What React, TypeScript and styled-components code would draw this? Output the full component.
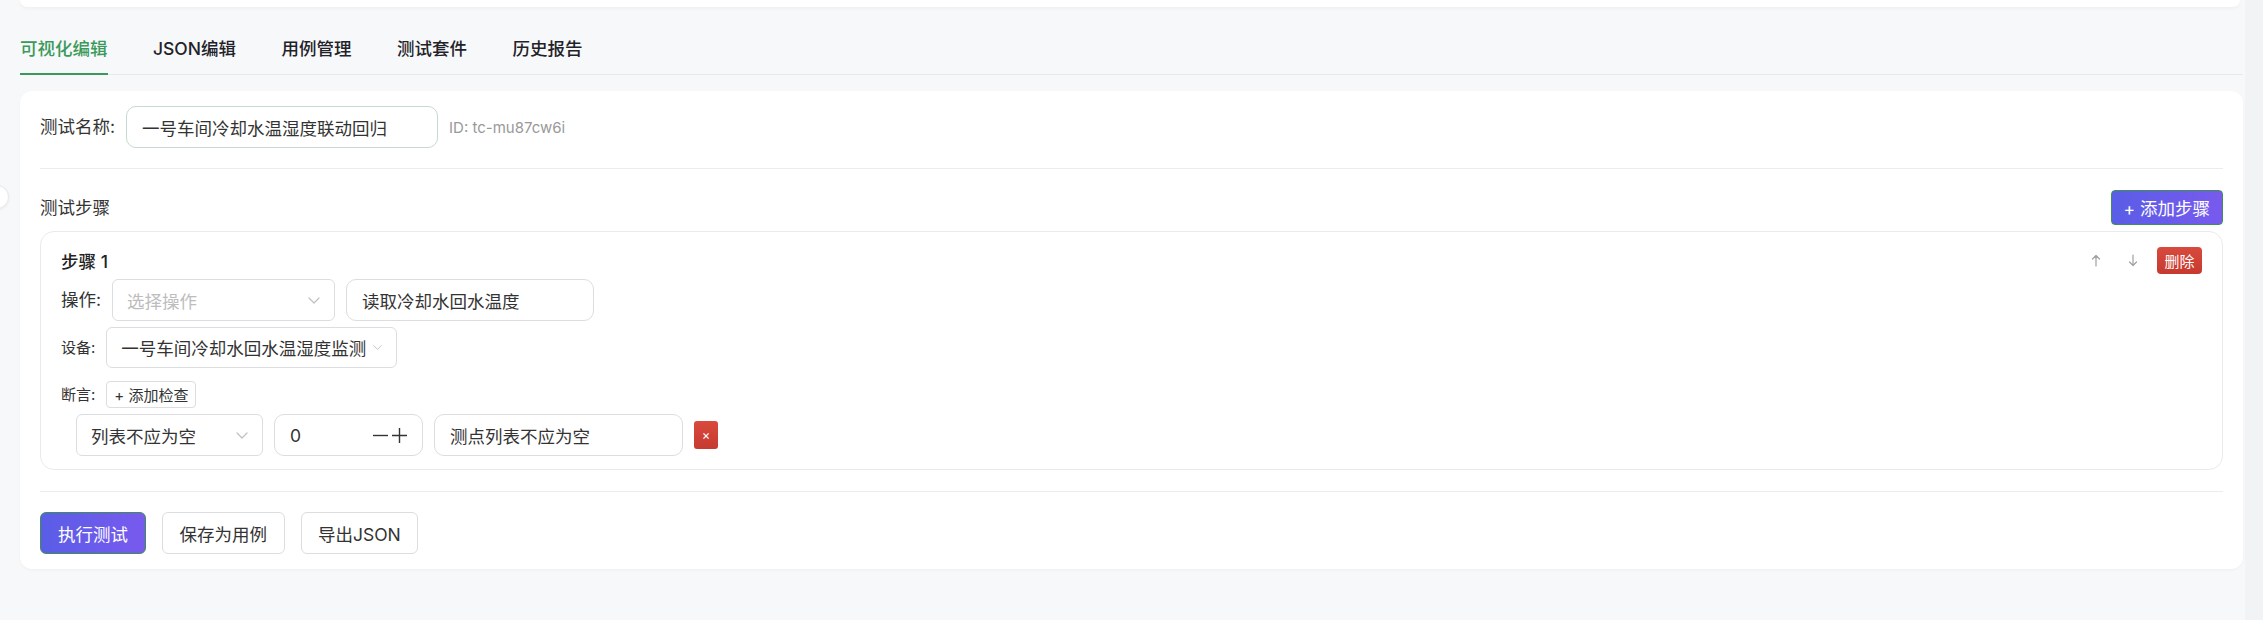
import React from "react";
import styled, { createGlobalStyle } from "styled-components";

const GlobalStyle = createGlobalStyle`
  html, body { margin: 0; padding: 0; background: #f2f3f5; }
  body {
    font-family: Inter, "Noto Sans CJK SC", "Noto Sans", sans-serif;
    color: #333;
  }
  * { box-sizing: border-box; }
`;

const Page = styled.div`
  position: relative;
  overflow: hidden;
  min-height: 620px;
  margin-right: 18px;
  padding: 0 2px 0 20px;
  background: #f7f8fa;
`;

const SideToggle = styled.div`
  position: absolute;
  left: -15px;
  top: 185px;
  width: 24px;
  height: 24px;
  border-radius: 50%;
  background: #fff;
  border: 1px solid #e6e8eb;
  box-shadow: 0 1px 3px rgba(0, 0, 0, 0.06);
`;

const TopCard = styled.div`
  height: 7px;
  margin-right: 3px;
  background: #fff;
  border-radius: 0 0 12px 12px;
  box-shadow: 0 1px 4px rgba(0, 0, 0, 0.05);
`;

const Tabs = styled.div`
  margin-top: 18px;
  display: flex;
  gap: 45.5px;
  border-bottom: 1px solid #e8e9ec;
`;

const Tab = styled.div<{ $active?: boolean }>`
  padding: 12px 0;
  margin-bottom: -1px;
  font-size: 17.5px;
  line-height: 24px;
  font-weight: 500;
  color: ${(p) => (p.$active ? "#3b9a5b" : "#1f2329")};
  border-bottom: 2px solid ${(p) => (p.$active ? "#3b9a5b" : "transparent")};
  white-space: nowrap;
`;

const Card = styled.div`
  margin-top: 16px;
  background: #fff;
  border-radius: 12px;
  padding: 15px 20px;
  box-shadow: 0 1px 3px rgba(0, 0, 0, 0.04);
`;

const NameRow = styled.div`
  display: flex;
  align-items: center;
  gap: 11px;
  padding-bottom: 20px;
  border-bottom: 1px solid #ececee;
`;

const Label = styled.span<{ $small?: boolean }>`
  font-size: ${(p) => (p.$small ? "15px" : "17.5px")};
  line-height: 24px;
  color: #333;
  white-space: nowrap;
`;

const TextInput = styled.input<{ $w: number; $tint?: boolean }>`
  width: ${(p) => p.$w}px;
  height: 42px;
  border: 1px solid ${(p) => (p.$tint ? "#c7d9cf" : "#dcdde0")};
  border-radius: 10px;
  padding: 0 15px;
  font-family: inherit;
  font-size: 17.5px;
  color: #333;
  background: #fff;
  outline: none;
`;

const IdText = styled.span`
  font-size: 15px;
  color: #999;
  white-space: nowrap;
`;

const SectionHeader = styled.div`
  margin-top: 21px;
  height: 35px;
  display: flex;
  align-items: center;
  justify-content: space-between;
`;

const SectionTitle = styled.span`
  font-size: 17.5px;
  line-height: 24px;
  color: #333;
`;

const PrimaryButton = styled.button<{ $h: number; $pad: number; $r: number }>`
  height: ${(p) => p.$h}px;
  padding: 0 ${(p) => p.$pad}px;
  border: 1px solid #3f8f54;
  border-radius: ${(p) => p.$r}px;
  background: linear-gradient(90deg, #5a5de7, #785aee);
  color: #fff;
  font-family: inherit;
  font-size: 17.5px;
  white-space: nowrap;
  cursor: pointer;
`;

const StepCard = styled.div`
  margin-top: 6px;
  border: 1px solid #eaeaec;
  border-radius: 14px;
  padding: 15px 20px 13px;
`;

const StepHeader = styled.div`
  height: 27px;
  display: flex;
  align-items: center;
  justify-content: space-between;
`;

const StepTitle = styled.span`
  font-size: 17.5px;
  font-weight: 500;
  color: #222;
`;

const Tools = styled.div`
  display: flex;
  align-items: center;
  gap: 10px;
`;

const IconButton = styled.button`
  width: 27px;
  height: 27px;
  padding: 0;
  border: none;
  background: none;
  color: #a0a0a0;
  display: flex;
  align-items: center;
  justify-content: center;
`;

const DangerButton = styled.button`
  height: 27px;
  padding: 0 7.5px;
  border: none;
  border-radius: 4px;
  background: linear-gradient(180deg, #d9493d, #c63a2f);
  color: #fff;
  font-family: inherit;
  font-size: 15px;
  white-space: nowrap;
`;

const FieldRow = styled.div<{ $mt: number; $indent?: number }>`
  display: flex;
  align-items: center;
  gap: 11px;
  margin-top: ${(p) => p.$mt}px;
  margin-left: ${(p) => p.$indent || 0}px;
`;

const Select = styled.div<{ $w: number; $h?: number; $placeholder?: boolean; $fit?: boolean }>`
  width: ${(p) => p.$w}px;
  height: ${(p) => p.$h || 42}px;
  border: 1px solid #dcdde0;
  border-radius: 6px;
  padding: 0 14px;
  display: flex;
  align-items: center;
  justify-content: ${(p) => (p.$fit ? "flex-start" : "space-between")};
  gap: 7px;
  font-size: 17.5px;
  color: ${(p) => (p.$placeholder ? "#bdbdbd" : "#333")};
  white-space: nowrap;
  overflow: hidden;
  background: #fff;
`;

const SmallButton = styled.button`
  height: 27px;
  padding: 0 7px;
  border: 1px solid #dcdde0;
  border-radius: 4px;
  background: #fff;
  color: #333;
  font-family: inherit;
  font-size: 15px;
  white-space: nowrap;
`;

const NumberBox = styled.div`
  width: 149px;
  height: 42px;
  border: 1px solid #dcdde0;
  border-radius: 10px;
  padding: 0 14px 0 15px;
  display: flex;
  align-items: center;
  font-size: 17.5px;
  color: #333;
`;

const NumberValue = styled.span`
  flex: 1;
`;

const Stepper = styled.div`
  display: flex;
  align-items: center;
  gap: 2px;
  color: #333;
`;

const XButton = styled.button`
  width: 24px;
  height: 28px;
  padding: 0;
  border: none;
  border-radius: 3px;
  background: linear-gradient(180deg, #d9493d, #c63a2f);
  color: #fff;
  font-family: inherit;
  font-size: 13px;
  line-height: 1;
`;

const Footer = styled.div`
  margin-top: 21px;
  border-top: 1px solid #ececee;
  padding-top: 20px;
  display: flex;
  gap: 16px;
`;

const OutlineButton = styled.button`
  height: 42px;
  padding: 0 16.5px;
  border: 1px solid #dcdde0;
  border-radius: 6px;
  background: #fff;
  color: #333;
  font-family: inherit;
  font-size: 17.5px;
  white-space: nowrap;
`;

const Chevron = () => (
  <svg width="12" height="7" viewBox="0 0 12 7" fill="none">
    <path d="M1 1l5 5 5-5" stroke="#bfbfbf" strokeWidth="1.2" strokeLinecap="round" strokeLinejoin="round" />
  </svg>
);

const Arrow = ({ down }: { down?: boolean }) => (
  <svg width="10" height="13" viewBox="0 0 10 13" fill="none" style={down ? { transform: "rotate(180deg)" } : undefined}>
    <path d="M5 1.5v10.5M1.5 5L5 1.5 8.5 5" stroke="currentColor" strokeWidth="1.2" strokeLinecap="round" strokeLinejoin="round" />
  </svg>
);

const Minus = () => (
  <svg width="17" height="17" viewBox="0 0 17 17" fill="none">
    <path d="M1 8.5h15" stroke="#333" strokeWidth="1.4" />
  </svg>
);

const Plus = () => (
  <svg width="17" height="17" viewBox="0 0 17 17" fill="none">
    <path d="M1 8.5h15M8.5 1v15" stroke="#333" strokeWidth="1.4" />
  </svg>
);

export default function App() {
  return (
    <>
      <GlobalStyle />
      <Page>
        <SideToggle />
        <TopCard />
        <Tabs>
          <Tab $active>可视化编辑</Tab>
          <Tab>JSON编辑</Tab>
          <Tab>用例管理</Tab>
          <Tab>测试套件</Tab>
          <Tab>历史报告</Tab>
        </Tabs>
        <Card>
          <NameRow>
            <Label>测试名称:</Label>
            <TextInput $w={312} $tint readOnly value="一号车间冷却水温湿度联动回归" />
            <IdText>ID: tc-mu87cw6i</IdText>
          </NameRow>

          <SectionHeader>
            <SectionTitle>测试步骤</SectionTitle>
            <PrimaryButton $h={35} $pad={12} $r={4}>+ 添加步骤</PrimaryButton>
          </SectionHeader>

          <StepCard>
            <StepHeader>
              <StepTitle>步骤 1</StepTitle>
              <Tools>
                <IconButton aria-label="上移"><Arrow /></IconButton>
                <IconButton aria-label="下移"><Arrow down /></IconButton>
                <DangerButton>删除</DangerButton>
              </Tools>
            </StepHeader>

            <FieldRow $mt={5}>
              <Label>操作:</Label>
              <Select $w={223} $placeholder>
                <span>选择操作</span>
                <Chevron />
              </Select>
              <TextInput $w={248} readOnly value="读取冷却水回水温度" />
            </FieldRow>

            <FieldRow $mt={6}>
              <Label $small>设备:</Label>
              <Select $w={291} $h={41} $fit>
                <span>一号车间冷却水回水温湿度监测</span>
                <Chevron />
              </Select>
            </FieldRow>

            <FieldRow $mt={13}>
              <Label $small>断言:</Label>
              <SmallButton>+ 添加检查</SmallButton>
            </FieldRow>

            <FieldRow $mt={6} $indent={15}>
              <Select $w={187}>
                <span>列表不应为空</span>
                <Chevron />
              </Select>
              <NumberBox>
                <NumberValue>0</NumberValue>
                <Stepper>
                  <Minus />
                  <Plus />
                </Stepper>
              </NumberBox>
              <TextInput $w={249} readOnly value="测点列表不应为空" />
              <XButton>×</XButton>
            </FieldRow>
          </StepCard>

          <Footer>
            <PrimaryButton $h={42} $pad={17} $r={6}>执行测试</PrimaryButton>
            <OutlineButton>保存为用例</OutlineButton>
            <OutlineButton>导出JSON</OutlineButton>
          </Footer>
        </Card>
      </Page>
    </>
  );
}
